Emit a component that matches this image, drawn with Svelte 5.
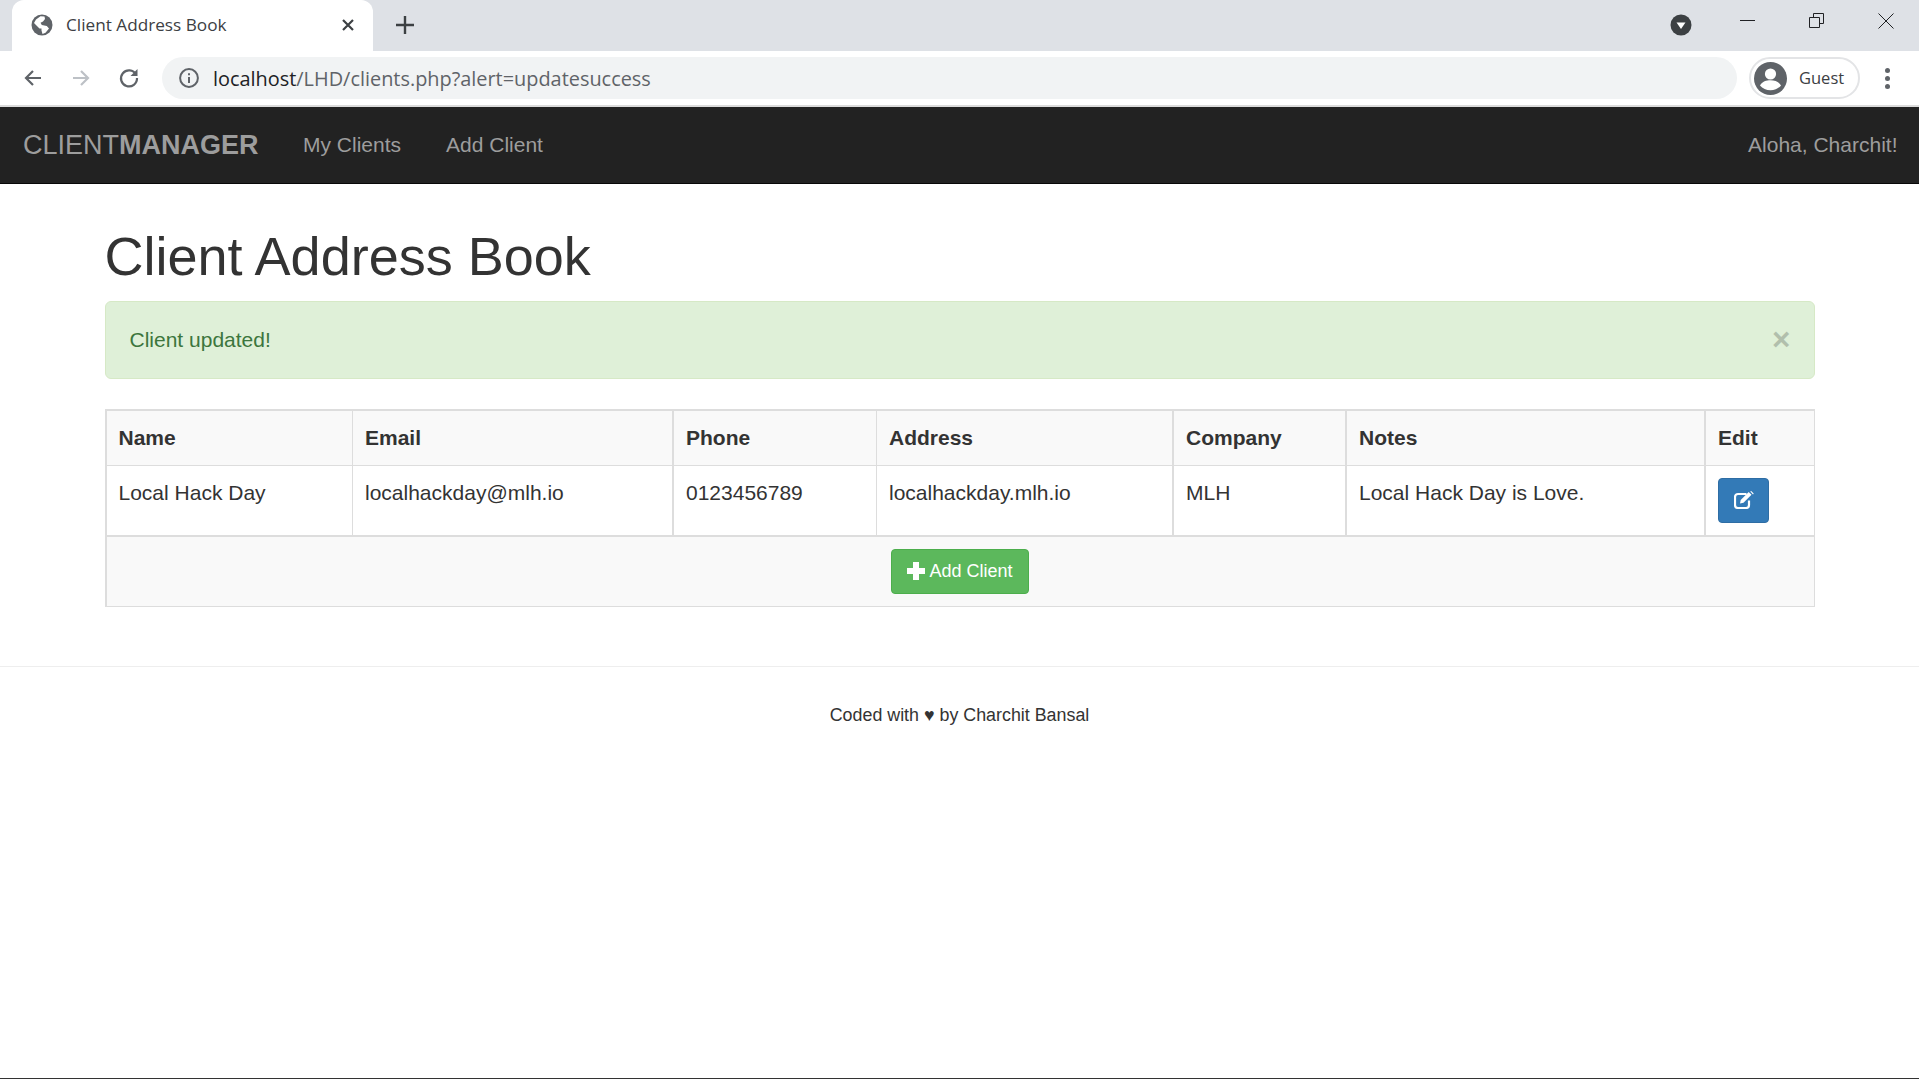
<script>
  const columns = [
    { label: "Name", width: 245, value: "Local Hack Day" },
    { label: "Email", width: 320, value: "localhackday@mlh.io" },
    { label: "Phone", width: 204, value: "0123456789" },
    { label: "Address", width: 296, value: "localhackday.mlh.io" },
    { label: "Company", width: 173, value: "MLH" },
    { label: "Notes", width: 359, value: "Local Hack Day is Love." },
    { label: "Edit", width: 110, value: null }
  ];
</script>

<div class="page">
  <div class="tabstrip">
    <div class="tab">
      <svg class="globe" width="22" height="22" viewBox="0 0 22 22">
        <circle cx="11" cy="11" r="10.5" fill="#5f6368" />
        <path d="M9.5 2.200 5 5.500 3 9l5.500 5.500h2v2l1 3.500 3-1.200 3.500-4.300-2.200-2.500-5-1-1.300-2.200 2.500-1.300 2-2.500-.5-2.500z" fill="#fff" />
      </svg>
      <span class="tab-title">Client Address Book</span>
      <svg class="tab-close" width="14" height="14" viewBox="0 0 14 14">
        <path d="M2 2l10 10M12 2 2 12" stroke="#3c4043" stroke-width="2.200" />
      </svg>
    </div>
    <svg class="new-tab" width="20" height="20" viewBox="0 0 20 20">
      <path d="M10 1v18M1 10h18" stroke="#3c4043" stroke-width="2.400" />
    </svg>
    <div class="strip-right">
      <svg class="tab-search" width="22" height="22" viewBox="0 0 22 22">
        <circle cx="11" cy="11" r="10.500" fill="#3c4043" />
        <path d="M6.500 8.500h9L11 15z" fill="#fff" />
      </svg>
      <svg class="win" width="16" height="16" viewBox="0 0 16 16">
        <path d="M0 7.500h15" stroke="#202124" stroke-width="1" />
      </svg>
      <svg class="win" width="16" height="16" viewBox="0 0 16 16">
        <path d="M.5 4.500h10v10H.5zM4.500 4.500v-4h10v10h-4" fill="none" stroke="#202124" stroke-width="1" />
      </svg>
      <svg class="win" width="16" height="16" viewBox="0 0 16 16">
        <path d="M.5.500l15 15M15.500.500l-15 15" stroke="#202124" stroke-width="1" />
      </svg>
    </div>
  </div>

  <div class="toolbar">
    <svg class="tool" width="24" height="24" viewBox="0 0 24 24">
      <path d="M20 12H5M12 5l-7 7 7 7" fill="none" stroke="#5f6368" stroke-width="2.200" />
    </svg>
    <svg class="tool" width="24" height="24" viewBox="0 0 24 24">
      <path d="M4 12h15M12 5l7 7-7 7" fill="none" stroke="#bdc1c6" stroke-width="2.200" />
    </svg>
    <svg class="tool" width="24" height="24" viewBox="0 0 24 24">
      <path d="M19 8.500A8 8 0 1 0 20 12" fill="none" stroke="#5f6368" stroke-width="2.200" />
      <path d="M20.500 3v7h-7z" fill="#5f6368" />
    </svg>
    <div class="omnibox">
      <svg width="22" height="22" viewBox="0 0 22 22">
        <circle cx="11" cy="11" r="8.900" fill="none" stroke="#5f6368" stroke-width="2" />
        <path d="M11 10v6M11 6.200v2" stroke="#5f6368" stroke-width="2" />
      </svg>
      <span class="url"><span class="host">localhost</span>/LHD/clients.php?alert=updatesuccess</span>
    </div>
    <div class="profile">
      <svg width="33" height="33" viewBox="0 0 33 33">
        <circle cx="16.500" cy="16.500" r="16.500" fill="#5f6368" />
        <circle cx="16.500" cy="12" r="5.600" fill="#fff" />
        <path d="M6 23.500c2.200-4 6.500-5.200 10.500-5.200s8.300 1.200 10.500 5.200c-2.500 3-6.300 4.700-10.500 4.700S8.500 26.500 6 23.500z" fill="#fff" />
      </svg>
      <span>Guest</span>
    </div>
    <div class="dots"><i></i><i></i><i></i></div>
  </div>

  <nav class="navbar">
    <a class="brand" href="#top">CLIENT<b>MANAGER</b></a>
    <a class="nav-link" href="#clients">My Clients</a>
    <a class="nav-link" href="#add">Add Client</a>
    <span class="greeting">Aloha, Charchit!</span>
  </nav>

  <main class="container">
    <h1>Client Address Book</h1>

    <div class="alert">
      <span>Client updated!</span>
      <span class="dismiss">×</span>
    </div>

    <table>
      <colgroup>
        {#each columns as col}
          <col style="width: {col.width}px" />
        {/each}
      </colgroup>
      <thead>
        <tr>
          {#each columns as col}
            <th>{col.label}</th>
          {/each}
        </tr>
      </thead>
      <tbody>
        <tr>
          {#each columns as col}
            <td>
              {#if col.value}
                {col.value}
              {:else}
                <a class="btn-edit" href="#edit" aria-label="Edit">
                  <svg width="20" height="18" viewBox="0 0 20 18">
                    <path d="M12.500 3H4A3 3 0 0 0 1 6v8a3 3 0 0 0 3 3h8a3 3 0 0 0 3-3V9.500" fill="none" stroke="#fff" stroke-width="2.200" />
                    <path d="M6 12.500 6.700 9l8-8 2.800 2.800-8 8z" fill="#fff" />
                    <path d="M16.200 .5l1-.5 2.500 2.500-.7 1z" fill="#fff" />
                  </svg>
                </a>
              {/if}
            </td>
          {/each}
        </tr>
      </tbody>
      <tfoot>
        <tr>
          <td colspan="7">
            <a class="btn-add" href="#add">
              <svg width="18" height="18" viewBox="0 0 18 18">
                <path d="M6 0h6v6h6v6h-6v6H6v-6H0V6h6z" fill="#fff" />
              </svg>
              Add Client
            </a>
          </td>
        </tr>
      </tfoot>
    </table>
  </main>

  <footer>
    <hr />
    <p>Coded with ♥ by Charchit Bansal</p>
  </footer>
</div>

<style>
  :global(body) {
    margin: 0;
    background: #fff;
  }

  .page {
    min-height: 100vh;
    box-sizing: border-box;
    border-bottom: 1px solid #333;
    font-family: "Liberation Sans", Arial, sans-serif;
    font-size: 21px;
    line-height: 30px;
    color: #333;
  }

  a {
    text-decoration: none;
  }

  /* browser chrome */
  .tabstrip {
    height: 51px;
    background: #dee1e6;
    display: flex;
    align-items: flex-start;
    padding-left: 12px;
  }

  .tab {
    width: 361px;
    height: 51px;
    box-sizing: border-box;
    background: #fff;
    border-radius: 12px 12px 0 0;
    display: flex;
    align-items: center;
    padding: 0 18px 1px 19px;
  }

  .globe {
    flex: none;
  }

  .tab-title {
    margin-left: 13px;
    flex: 1;
    font-family: "Open Sans", sans-serif;
    font-size: 17.200px;
    color: #3c4043;
  }

  .new-tab {
    margin: 15px 0 0 22px;
  }

  .strip-right {
    margin-left: auto;
    display: flex;
    align-items: center;
    height: 50px;
    padding-right: 25px;
  }

  .tab-search {
    margin-right: 48px;
  }

  .win {
    margin-left: 53px;
    margin-top: -8px;
  }

  .tab-search + .win {
    margin-left: 0;
  }

  .toolbar {
    height: 54px;
    background: #fff;
    display: flex;
    align-items: center;
    padding-left: 21px;
    border-bottom: 2px solid #dcdcdc;
  }

  .tool {
    margin-right: 24px;
  }

  .tool:nth-child(3) {
    margin-right: 21px;
  }

  .omnibox {
    flex: 1;
    height: 42px;
    background: #f1f3f4;
    border-radius: 21px;
    display: flex;
    align-items: center;
    padding-left: 16px;
    min-width: 0;
  }

  .url {
    margin-left: 13px;
    padding-top: 2px;
    font-family: "Open Sans", sans-serif;
    font-size: 19.900px;
    color: #5f6368;
  }

  .host {
    color: #202124;
  }

  .profile {
    width: 111px;
    height: 42px;
    box-sizing: border-box;
    margin-left: 12px;
    border: 2px solid #e3e4e6;
    border-radius: 21px;
    display: flex;
    align-items: center;
    padding-left: 3px;
    gap: 12px;
    font-family: "Open Sans", sans-serif;
    font-size: 16.500px;
    color: #3c4043;
  }

  .dots {
    width: 59px;
    box-sizing: border-box;
    padding-right: 5px;
    display: flex;
    flex-direction: column;
    align-items: center;
    gap: 3px;
  }

  .dots i {
    width: 5px;
    height: 5px;
    border-radius: 50%;
    background: #5f6368;
  }

  /* site navbar */
  .navbar {
    height: 77px;
    box-sizing: border-box;
    background: #222;
    border-bottom: 1px solid #080808;
    display: flex;
    align-items: center;
    padding: 0 21.500px 0 23px;
    color: #9d9d9d;
  }

  .navbar a {
    color: #9d9d9d;
  }

  .brand {
    font-size: 27px;
    margin-right: 44.500px;
  }

  .nav-link {
    margin-right: 45px;
  }

  .greeting {
    margin-left: auto;
  }

  /* content */
  .container {
    width: 1710px;
    margin: 0 auto;
    padding-top: 43px;
  }

  h1 {
    margin: 0 0 15px;
    font-size: 54px;
    font-weight: 500;
    line-height: 59px;
  }

  .alert {
    height: 78px;
    box-sizing: border-box;
    background: #dff0d8;
    border: 1px solid #d6e9c6;
    border-radius: 6px;
    color: #3c763d;
    display: flex;
    align-items: center;
    justify-content: space-between;
    padding: 0 23px 0 24px;
    margin-bottom: 30px;
  }

  .dismiss {
    font-size: 31.500px;
    font-weight: 700;
    color: #000;
    opacity: 0.2;
    margin-top: -2px;
  }

  table {
    width: 1710px;
    table-layout: fixed;
    border-collapse: separate;
    border-spacing: 0;
    border-top: 2px solid #ddd;
    border-left: 2px solid #ddd;
    border-right: 1px solid #ddd;
    border-bottom: 1px solid #ddd;
  }

  th,
  td {
    box-sizing: border-box;
    padding: 12px;
    text-align: left;
    vertical-align: top;
    border-left: 1px solid #ddd;
  }

  th:not(:first-child),
  td:not(:first-child) {
    padding-left: 12.500px;
  }

  th:first-child,
  td:first-child {
    border-left: 0;
  }

  th {
    height: 55px;
    background: #f9f9f9;
    font-weight: 700;
    border-bottom: 1px solid #ddd;
  }

  th:nth-child(3),
  td:nth-child(3),
  th:nth-child(5),
  td:nth-child(5),
  th:nth-child(6),
  td:nth-child(6),
  th:nth-child(7),
  td:nth-child(7) {
    border-left-width: 2px;
  }

  tbody td {
    height: 71px;
    border-bottom: 2px solid #ddd;
  }

  tfoot td {
    height: 69px;
    background: #f9f9f9;
    text-align: center;
    border-left: 0;
  }

  .btn-edit {
    width: 51px;
    height: 45px;
    box-sizing: border-box;
    display: flex;
    align-items: center;
    justify-content: center;
    padding-bottom: 2px;
    background: #337ab7;
    border: 1px solid #2e6da4;
    border-radius: 4px;
  }

  .btn-add {
    width: 138px;
    height: 45px;
    box-sizing: border-box;
    display: inline-flex;
    align-items: center;
    justify-content: center;
    gap: 4px;
    padding-bottom: 1px;
    background: #5cb85c;
    border: 1px solid #4cae4c;
    border-radius: 4px;
    color: #fff;
    font-size: 18px;
    vertical-align: top;
  }

  /* page footer */
  footer {
    padding-top: 59px;
    text-align: center;
  }

  hr {
    margin: 0;
    border: 0;
    border-top: 1px solid #eee;
  }

  p {
    margin: 35px 0 0;
    font-size: 17.850px;
    line-height: 27px;
  }
</style>
